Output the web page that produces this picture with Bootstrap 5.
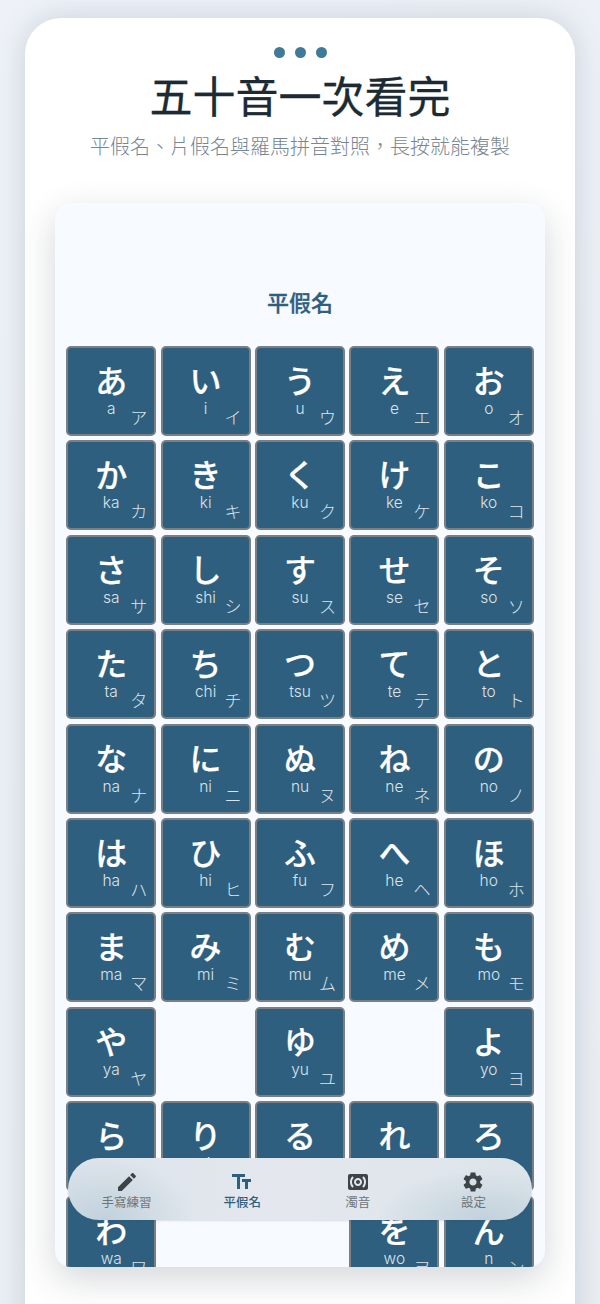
<!DOCTYPE html>
<html lang="zh-Hant">
<head>
<meta charset="utf-8">
<title>五十音</title>
<link rel="stylesheet" href="https://cdn.jsdelivr.net/npm/bootstrap@5.3.0/dist/css/bootstrap.min.css">
<style>
html,body{height:1304px;overflow:hidden}
body{background:linear-gradient(135deg,#eef2f8,#eaeef3);font-family:"Noto Sans CJK TC","Noto Sans CJK JP",sans-serif}
.sheet{margin:18px 25px 0;height:1320px;background:#fff;border-radius:36px 36px 0 0;box-shadow:0 0 30px rgba(60,80,100,.2);padding-top:29px}
.dots{gap:10px;height:12px}
.dots span{width:11px;height:11px;border-radius:50%;background:#3f7a98}
.ttl{font-size:43px;line-height:56px;font-weight:400;-webkit-text-stroke:.3px #1c2b33;color:#1c2b33;margin:7px 0 0}
.sub{font-size:20px;line-height:30px;font-weight:300;color:#778792;margin:9px 0 0}
.panel{position:relative;margin:42px 30px 0;height:1064px;background:#f7faff;border-radius:16px;box-shadow:0 12px 36px rgba(40,50,60,.2);overflow:hidden}
.ph{font-size:22px;line-height:30px;font-weight:500;-webkit-text-stroke:.3px #2f5f7f;color:#2f5f7f;padding-top:83px;margin:0 0 30px}
.kgrid{display:grid;grid-template-columns:repeat(5,90px);gap:4.4px;justify-content:center}
.tile{position:relative;height:90px;background:#2f5f7f;border:2px solid #7a7f84;border-radius:5px;color:#fff}
.kn{font-size:32px;font-weight:500;-webkit-text-stroke:.2px #fff;line-height:40px;margin-top:11px}
.rm{font-family:Inter,"Liberation Sans",sans-serif;font-size:15.5px;font-weight:300;line-height:16px;color:#dbe4ea;margin-top:2px}
.kt{position:absolute;right:7px;bottom:6px;font-size:17px;font-weight:300;line-height:22px;color:#dbe4ea}
.pill{position:absolute;left:13px;right:13px;top:955px;height:62px;border-radius:31px;background:radial-gradient(ellipse 90px 60px at 8% 100%,rgba(190,207,218,.9),transparent),radial-gradient(ellipse 110px 50px at 90% 100%,rgba(190,207,218,.9),transparent),linear-gradient(90deg,#dbe3ea,#e4e8ee 45%,#dce4ea);box-shadow:0 1px 2px rgba(60,80,100,.15)}
.tab{width:115.6px;color:#6e7478;font-size:12.5px;line-height:16px;padding-top:12px}
.tab svg{display:block;width:24px;height:24px;fill:#3d4346;margin:0 auto}
.tab.on{color:#2f5f7f;font-weight:500}
.tab.on svg{fill:#2f5f7f}
</style>
</head>
<body>
<div class="sheet">
  <div class="dots d-flex justify-content-center"><span></span><span></span><span></span></div>
  <h1 class="ttl text-center">五十音一次看完</h1>
  <p class="sub text-center">平假名、片假名與羅馬拼音對照，長按就能複製</p>
  <div class="panel">
    <h2 class="ph text-center">平假名</h2>
    <div class="kgrid">
      <div class="tile text-center"><div class="kn">あ</div><div class="rm">a</div><span class="kt">ア</span></div>
      <div class="tile text-center"><div class="kn">い</div><div class="rm">i</div><span class="kt">イ</span></div>
      <div class="tile text-center"><div class="kn">う</div><div class="rm">u</div><span class="kt">ウ</span></div>
      <div class="tile text-center"><div class="kn">え</div><div class="rm">e</div><span class="kt">エ</span></div>
      <div class="tile text-center"><div class="kn">お</div><div class="rm">o</div><span class="kt">オ</span></div>
      <div class="tile text-center"><div class="kn">か</div><div class="rm">ka</div><span class="kt">カ</span></div>
      <div class="tile text-center"><div class="kn">き</div><div class="rm">ki</div><span class="kt">キ</span></div>
      <div class="tile text-center"><div class="kn">く</div><div class="rm">ku</div><span class="kt">ク</span></div>
      <div class="tile text-center"><div class="kn">け</div><div class="rm">ke</div><span class="kt">ケ</span></div>
      <div class="tile text-center"><div class="kn">こ</div><div class="rm">ko</div><span class="kt">コ</span></div>
      <div class="tile text-center"><div class="kn">さ</div><div class="rm">sa</div><span class="kt">サ</span></div>
      <div class="tile text-center"><div class="kn">し</div><div class="rm">shi</div><span class="kt">シ</span></div>
      <div class="tile text-center"><div class="kn">す</div><div class="rm">su</div><span class="kt">ス</span></div>
      <div class="tile text-center"><div class="kn">せ</div><div class="rm">se</div><span class="kt">セ</span></div>
      <div class="tile text-center"><div class="kn">そ</div><div class="rm">so</div><span class="kt">ソ</span></div>
      <div class="tile text-center"><div class="kn">た</div><div class="rm">ta</div><span class="kt">タ</span></div>
      <div class="tile text-center"><div class="kn">ち</div><div class="rm">chi</div><span class="kt">チ</span></div>
      <div class="tile text-center"><div class="kn">つ</div><div class="rm">tsu</div><span class="kt">ツ</span></div>
      <div class="tile text-center"><div class="kn">て</div><div class="rm">te</div><span class="kt">テ</span></div>
      <div class="tile text-center"><div class="kn">と</div><div class="rm">to</div><span class="kt">ト</span></div>
      <div class="tile text-center"><div class="kn">な</div><div class="rm">na</div><span class="kt">ナ</span></div>
      <div class="tile text-center"><div class="kn">に</div><div class="rm">ni</div><span class="kt">ニ</span></div>
      <div class="tile text-center"><div class="kn">ぬ</div><div class="rm">nu</div><span class="kt">ヌ</span></div>
      <div class="tile text-center"><div class="kn">ね</div><div class="rm">ne</div><span class="kt">ネ</span></div>
      <div class="tile text-center"><div class="kn">の</div><div class="rm">no</div><span class="kt">ノ</span></div>
      <div class="tile text-center"><div class="kn">は</div><div class="rm">ha</div><span class="kt">ハ</span></div>
      <div class="tile text-center"><div class="kn">ひ</div><div class="rm">hi</div><span class="kt">ヒ</span></div>
      <div class="tile text-center"><div class="kn">ふ</div><div class="rm">fu</div><span class="kt">フ</span></div>
      <div class="tile text-center"><div class="kn">へ</div><div class="rm">he</div><span class="kt">ヘ</span></div>
      <div class="tile text-center"><div class="kn">ほ</div><div class="rm">ho</div><span class="kt">ホ</span></div>
      <div class="tile text-center"><div class="kn">ま</div><div class="rm">ma</div><span class="kt">マ</span></div>
      <div class="tile text-center"><div class="kn">み</div><div class="rm">mi</div><span class="kt">ミ</span></div>
      <div class="tile text-center"><div class="kn">む</div><div class="rm">mu</div><span class="kt">ム</span></div>
      <div class="tile text-center"><div class="kn">め</div><div class="rm">me</div><span class="kt">メ</span></div>
      <div class="tile text-center"><div class="kn">も</div><div class="rm">mo</div><span class="kt">モ</span></div>
      <div class="tile text-center"><div class="kn">や</div><div class="rm">ya</div><span class="kt">ヤ</span></div>
      <div></div>
      <div class="tile text-center"><div class="kn">ゆ</div><div class="rm">yu</div><span class="kt">ユ</span></div>
      <div></div>
      <div class="tile text-center"><div class="kn">よ</div><div class="rm">yo</div><span class="kt">ヨ</span></div>
      <div class="tile text-center"><div class="kn">ら</div><div class="rm">ra</div><span class="kt">ラ</span></div>
      <div class="tile text-center"><div class="kn">り</div><div class="rm">ri</div><span class="kt">リ</span></div>
      <div class="tile text-center"><div class="kn">る</div><div class="rm">ru</div><span class="kt">ル</span></div>
      <div class="tile text-center"><div class="kn">れ</div><div class="rm">re</div><span class="kt">レ</span></div>
      <div class="tile text-center"><div class="kn">ろ</div><div class="rm">ro</div><span class="kt">ロ</span></div>
      <div class="tile text-center"><div class="kn">わ</div><div class="rm">wa</div><span class="kt">ワ</span></div>
      <div></div>
      <div></div>
      <div class="tile text-center"><div class="kn">を</div><div class="rm">wo</div><span class="kt">ヲ</span></div>
      <div class="tile text-center"><div class="kn">ん</div><div class="rm">n</div><span class="kt">ン</span></div>
    </div>
    <div class="pill d-flex justify-content-center">
      <div class="tab text-center"><svg viewBox="0 0 24 24"><path d="M3 17.25V21h3.75L17.81 9.94l-3.75-3.75L3 17.25zM20.71 7.04c.39-.39.39-1.02 0-1.41l-2.34-2.34c-.39-.39-1.02-.39-1.41 0l-1.83 1.83 3.75 3.75 1.83-1.83z"/></svg>手寫練習</div>
      <div class="tab on text-center"><svg viewBox="0 0 24 24"><path d="M2 4v3h5v12h3V7h5V4H2zm19 5h-9v3h3v7h3v-7h3V9z"/></svg>平假名</div>
      <div class="tab text-center"><svg viewBox="0 0 24 24"><path d="M20 4H4c-1.1 0-2 .9-2 2v12c0 1.1.9 2 2 2h16c1.1 0 2-.9 2-2V6c0-1.1-.9-2-2-2zM7.76 16.24l-1.41 1.41C4.78 16.1 4 14.05 4 12c0-2.05.78-4.1 2.34-5.66l1.41 1.41C6.59 8.93 6 10.46 6 12s.59 3.07 1.76 4.24zM12 16c-2.21 0-4-1.79-4-4s1.79-4 4-4 4 1.79 4 4-1.79 4-4 4zm5.66 1.66l-1.41-1.41C17.41 15.07 18 13.54 18 12s-.59-3.07-1.76-4.24l1.41-1.41C19.22 7.9 20 9.95 20 12c0 2.05-.78 4.1-2.34 5.66zM12 10c-1.1 0-2 .9-2 2s.9 2 2 2 2-.9 2-2-.9-2-2-2z"/></svg>濁音</div>
      <div class="tab text-center"><svg viewBox="0 0 24 24"><path d="M19.14 12.94c.04-.3.06-.61.06-.94 0-.32-.02-.64-.07-.94l2.03-1.58c.18-.14.23-.41.12-.61l-1.92-3.32c-.12-.22-.37-.29-.59-.22l-2.39.96c-.5-.38-1.03-.7-1.62-.94l-.36-2.54c-.04-.24-.24-.41-.48-.41h-3.84c-.24 0-.43.17-.47.41l-.36 2.54c-.59.24-1.13.57-1.62.94l-2.39-.96c-.22-.08-.47 0-.59.22L2.74 8.87c-.12.21-.08.47.12.61l2.03 1.58c-.05.3-.09.63-.09.94s.02.64.07.94l-2.03 1.58c-.18.14-.23.41-.12.61l1.92 3.32c.12.22.37.29.59.22l2.39-.96c.5.38 1.03.7 1.62.94l.36 2.54c.05.24.24.41.48.41h3.84c.24 0 .44-.17.47-.41l.36-2.54c.59-.24 1.13-.56 1.62-.94l2.39.96c.22.08.47 0 .59-.22l1.92-3.32c.12-.22.07-.47-.12-.61l-2.01-1.58zM12 15.6c-1.98 0-3.6-1.62-3.6-3.6s1.62-3.6 3.6-3.6 3.6 1.62 3.6 3.6-1.62 3.6-3.6 3.6z"/></svg>設定</div>
    </div>
  </div>
</div>
<script src="https://cdn.jsdelivr.net/npm/bootstrap@5.3.0/dist/js/bootstrap.bundle.min.js"></script>
</body>
</html>
